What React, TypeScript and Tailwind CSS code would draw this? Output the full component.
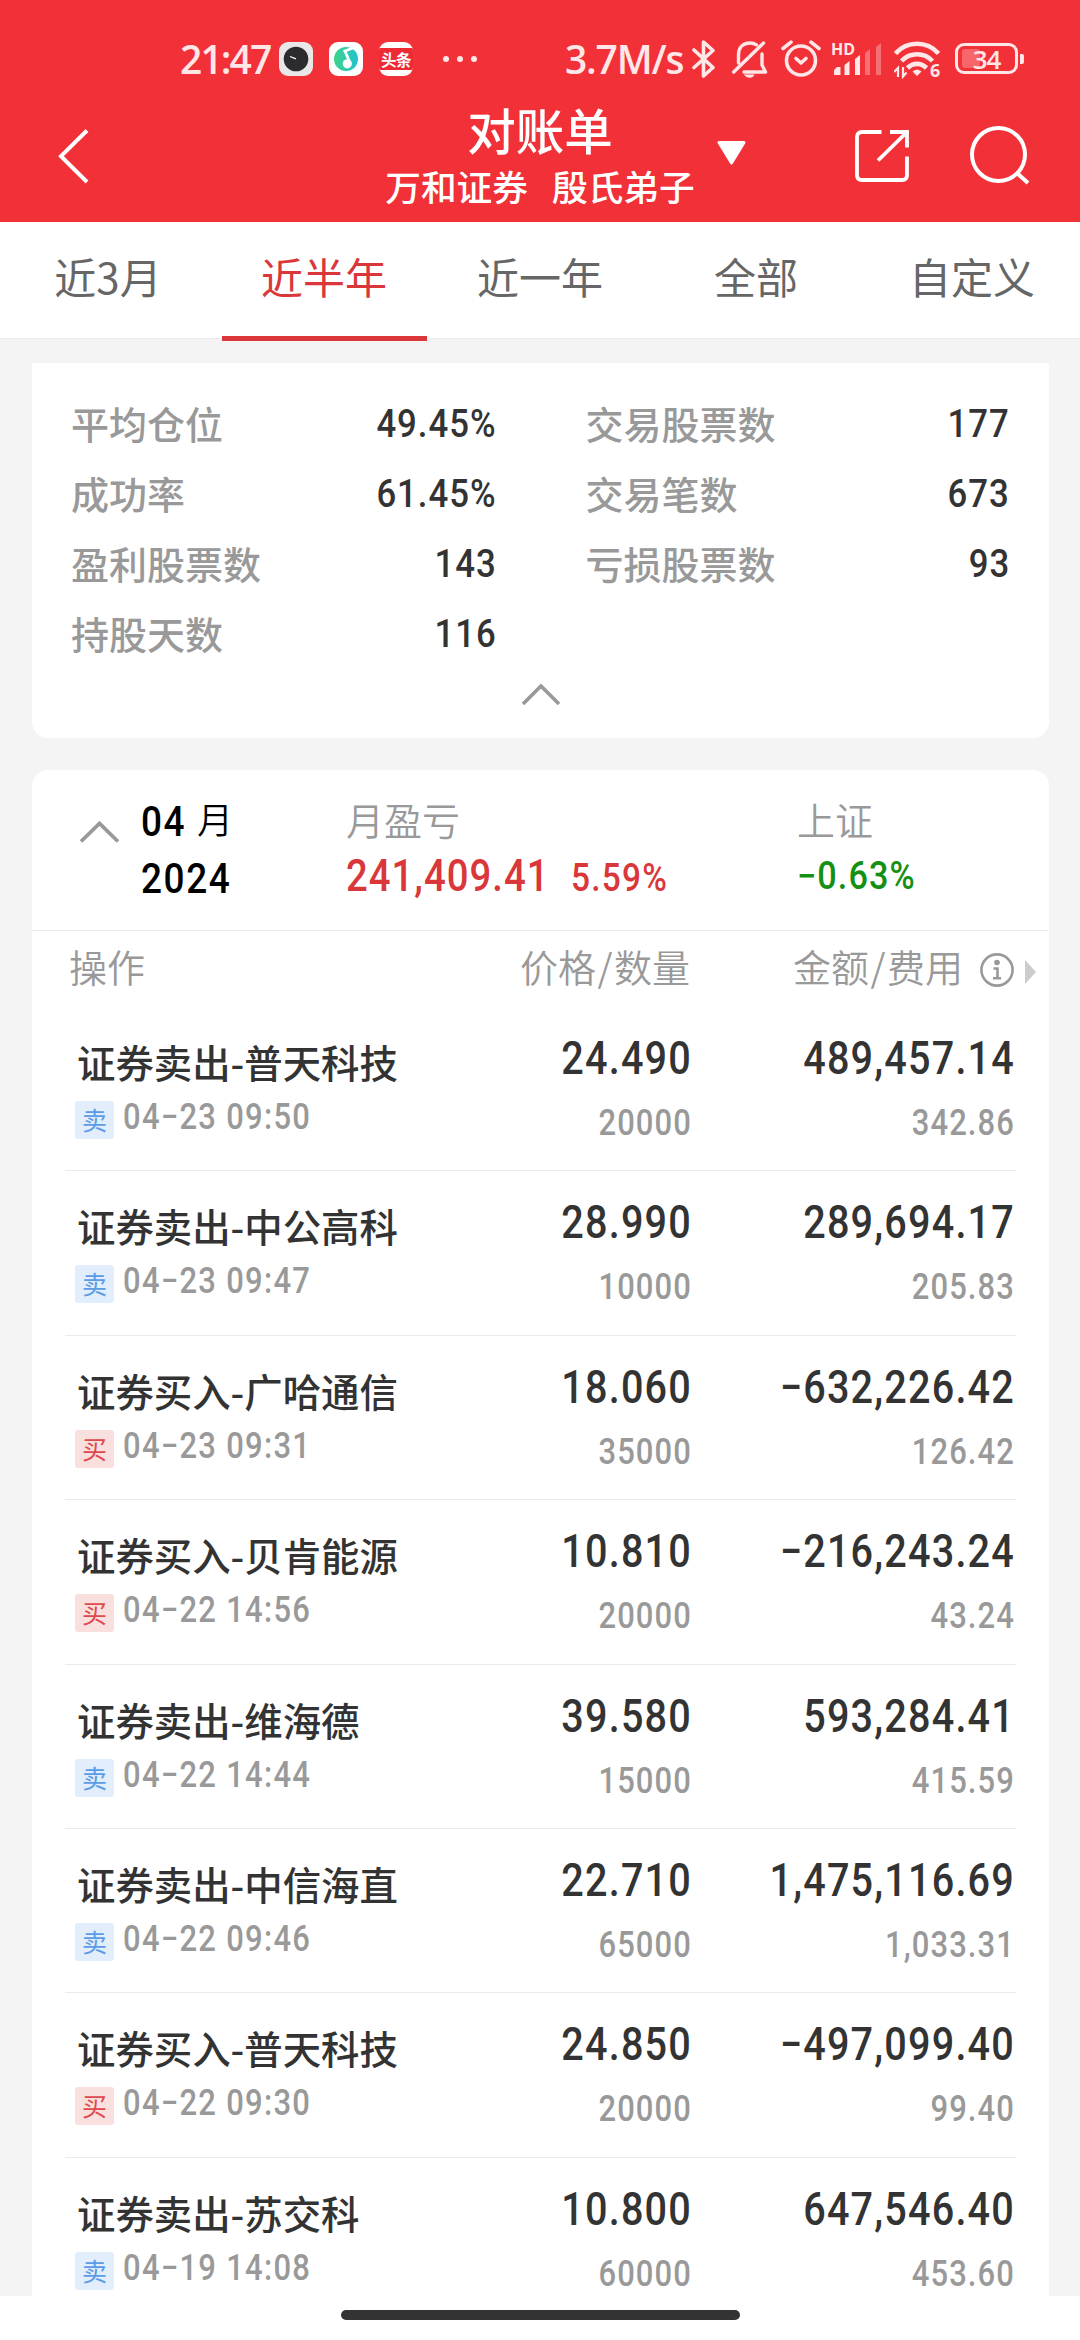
import React from "react";

const CJK = "font-['Noto_Sans_CJK_SC',sans-serif]";
const NUM = "font-[Roboto,'Noto_Sans_CJK_SC',sans-serif]";

type Trade = {
  side: "sell" | "buy";
  name: string;
  time: string;
  price: string;
  qty: string;
  amount: string;
  fee: string;
};

const trades: Trade[] = [
  { side: "sell", name: "普天科技", time: "04−23 09:50", price: "24.490", qty: "20000", amount: "489,457.14", fee: "342.86" },
  { side: "sell", name: "中公高科", time: "04−23 09:47", price: "28.990", qty: "10000", amount: "289,694.17", fee: "205.83" },
  { side: "buy", name: "广哈通信", time: "04−23 09:31", price: "18.060", qty: "35000", amount: "−632,226.42", fee: "126.42" },
  { side: "buy", name: "贝肯能源", time: "04−22 14:56", price: "10.810", qty: "20000", amount: "−216,243.24", fee: "43.24" },
  { side: "sell", name: "维海德", time: "04−22 14:44", price: "39.580", qty: "15000", amount: "593,284.41", fee: "415.59" },
  { side: "sell", name: "中信海直", time: "04−22 09:46", price: "22.710", qty: "65000", amount: "1,475,116.69", fee: "1,033.31" },
  { side: "buy", name: "普天科技", time: "04−22 09:30", price: "24.850", qty: "20000", amount: "−497,099.40", fee: "99.40" },
  { side: "sell", name: "苏交科", time: "04−19 14:08", price: "10.800", qty: "60000", amount: "647,546.40", fee: "453.60" },
];

function StatusBar() {
  return (
    <div className="flex h-[90px] items-start pl-[180px] pt-[35px] text-[#ffe6e7]">
      <div className="w-[99px] whitespace-nowrap font-['Open_Sans',sans-serif] text-[39px] font-semibold leading-[48px] tracking-[-1.900px]">21:47</div>
      <div className="mt-[7px] flex gap-4">
        <svg width="34" height="34" viewBox="0 0 34 34">
          <rect width="34" height="34" rx="9" fill="#e9e7e7" />
          <circle cx="17" cy="17" r="12.3" fill="#2c2c2e" />
          <path d="M11 14.5l6 2.4" stroke="#fff" strokeWidth="1.3" />
        </svg>
        <svg width="34" height="34" viewBox="0 0 34 34">
          <defs>
            <linearGradient id="disc" x1="0" x2="1">
              <stop offset="0" stopColor="#3ed28a" />
              <stop offset="1" stopColor="#1fc3cf" />
            </linearGradient>
          </defs>
          <rect width="34" height="34" rx="9" fill="#fbfffe" />
          <circle cx="17" cy="17" r="12" fill="url(#disc)" />
          <path d="M14.500 9.500L24 6M16 9l5 12" stroke="#fff" strokeWidth="2.8" fill="none" />
          <circle cx="18.300" cy="21.800" r="4.600" fill="#fff" />
        </svg>
        <div className="flex h-[34px] w-[34px] flex-col justify-center overflow-hidden rounded-[9px] bg-white">
          <div className={CJK + " flex h-[22px] w-[34px] items-center justify-center bg-[#ee2a35] text-[15.500px] font-bold leading-[22px] tracking-[-0.500px] text-white"}>头条</div>
        </div>
      </div>
      <svg className="ml-[30px] mt-[21px]" width="34" height="6" viewBox="0 0 34 6" fill="currentColor">
        <circle cx="3" cy="3" r="3" />
        <circle cx="17" cy="3" r="3" />
        <circle cx="31" cy="3" r="3" />
      </svg>
      <div className="ml-[88px] w-[127px] whitespace-nowrap font-['Open_Sans',sans-serif] text-[39px] font-semibold leading-[48px] tracking-[-1.200px]">3.7M/s</div>
      <svg className="mt-[4px]" width="24" height="40" viewBox="0 0 24 40" fill="none" stroke="currentColor" strokeWidth="3.6" strokeLinejoin="round" strokeLinecap="round">
        <path d="M2 11l19 17.500l-9.500 8.500V3L21 11.500L2 28.500" />
      </svg>
      <svg className="ml-4 mt-[5px]" width="36" height="40" viewBox="0 0 36 40" fill="none" stroke="currentColor" strokeWidth="3.4" strokeLinejoin="round" strokeLinecap="round">
        <path d="M6.500 23V15C6.500 7 11.500 3 18 3c2.500 0 4.700.6 6.500 1.800" />
        <path d="M30 14v11l3.500 7H12" />
        <path d="M31.500 3L1.700 32" />
        <path d="M13 35h9c-1 3-8 3-9 0z" fill="currentColor" strokeWidth="1" />
      </svg>
      <svg className="ml-[13px] mt-[5px]" width="40" height="38" viewBox="0 0 40 38" fill="none" stroke="currentColor" strokeWidth="3.6" strokeLinecap="round">
        <circle cx="20" cy="20.500" r="14.500" />
        <path d="M2 8.500l8-6.300M38 8.500l-8-6.300" />
        <path d="M15 18.500l5 4.500l5-4.500" strokeLinejoin="round" />
      </svg>
      <div className="relative ml-[10px] h-[40px] w-[52px]">
        <svg className="absolute left-[3px] top-[8px]" width="48" height="32" viewBox="0 0 48 32" fill="currentColor">
          <path d="M0 27l3-3h3.500v8H0zM10.500 22l5-4v14h-5zM21 16l5-4v20h-5z" />
          <path d="M31 10l5-4v26h-5zM42 4l5-4v32h-5z" opacity=".35" />
        </svg>
        <span className="absolute left-0 top-[6px] font-['Open_Sans',sans-serif] text-[16px] font-bold leading-[16px]">HD</span>
      </div>
      <div className="relative ml-[11px] h-[44px] w-[47px]">
        <svg className="absolute left-0 top-[6px]" width="46" height="38" viewBox="0 0 46 38" fill="none" stroke="currentColor" strokeWidth="4.600" strokeLinecap="butt">
          <path d="M1.500 12.500C13-.5 33-.5 44.500 12.500" />
          <path d="M7.500 20c8.500-9 22.500-9 31 0" />
          <path d="M13.500 27c5.500-5.500 13.500-5.500 19 0" />
          <path d="M23 35l-4.500-4.500c3-2.500 6-2.500 9 0z" fill="currentColor" stroke="none" />
          <path d="M4 36V27L0 31M9 26v9.500l3.500-4" strokeWidth="2.200" />
        </svg>
        <span className="absolute left-[36px] top-[26px] font-['Open_Sans',sans-serif] text-[18px] font-bold leading-[18px]">6</span>
      </div>
      <div className="ml-[14px] mt-[8px] flex items-center">
        <div className="relative flex h-[31px] w-[63px] items-center justify-center rounded-[9px] border-[3px] border-current">
          <div className="absolute left-[4px] top-[3px] h-[19px] w-[18px] rounded-[3px] bg-[#f8656b]" />
          <span className="relative font-['Open_Sans',sans-serif] text-[26px] font-semibold leading-[24px] tracking-[-1px]">34</span>
        </div>
        <div className="ml-[2px] h-[10px] w-[4px] rounded-r-[2px] bg-current" />
      </div>
    </div>
  );
}

function TitleBar() {
  return (
    <div className="flex h-[132px] items-start text-white">
      <svg className="ml-[56px] mt-[38px]" width="34" height="56" viewBox="0 0 34 56" fill="none" stroke="currentColor" strokeWidth="4">
        <path d="M31 2.500L5 28.200L31 54" />
      </svg>
      <div className={CJK + " ml-[294px] w-[312px] whitespace-nowrap text-center font-medium"}>
        <div className="mt-[9px] text-[48.500px] leading-[60px]">对账单</div>
        <div className="mt-[5px] text-[35.700px] leading-[44px]">
          万和证券<span className="inline-block w-[24px]"> </span>殷氏弟子
        </div>
      </div>
      <svg className="ml-[21px] mt-[50px]" width="29" height="26" viewBox="0 0 29 26" fill="currentColor" stroke="currentColor" strokeWidth="3" strokeLinejoin="round">
        <path d="M2 2.500h25L14.500 23z" />
      </svg>
      <svg className="ml-[108px] mt-[39px]" width="56" height="56" viewBox="0 0 56 56" fill="none" stroke="currentColor" strokeWidth="3.800">
        <path d="M27.500 3H8Q3 3 3 8V46Q3 51 8 51H48Q53 51 53 46V27.500" />
        <path d="M36 3H53V18.500M52 4L24 31.500" />
      </svg>
      <svg className="ml-[59px] mt-[34px]" width="62" height="62" viewBox="0 0 62 62" fill="none" stroke="currentColor" strokeWidth="4">
        <circle cx="29.500" cy="30.500" r="26.500" />
        <path d="M48.500 49.500L59 59" />
      </svg>
    </div>
  );
}

const tabs = ["近3月", "近半年", "近一年", "全部", "自定义"];

function Tabs() {
  return (
    <div className={CJK + " flex h-[117px] border-b border-[#ebebeb] bg-white text-[42px] leading-[60px]"}>
      {tabs.map((t, i) => (
        <div key={t} className={i === 1 ? "relative w-[216px] pt-[24px] text-center text-[#d9373a]" : "w-[216px] pt-[24px] text-center text-[#666]"}>
          {t}
          {i === 1 && <div className="absolute -bottom-[3px] left-[6px] h-[5px] w-[205px] bg-[#d9373a]" />}
        </div>
      ))}
    </div>
  );
}

function Stat({ label, value, right }: { label: string; value: string; right?: boolean }) {
  return (
    <div className={right ? "flex h-[70px] justify-between pl-[45px] pr-[39px]" : "flex h-[70px] justify-between pl-[39px] pr-[44px]"}>
      <span className={CJK + " text-[38px] font-[450] leading-[58px] text-[#999]"}>{label}</span>
      <span className={NUM + " origin-right scale-x-[.88] text-[39.500px] font-[550] leading-[60px] tracking-[1.100px] text-[#333]"}>{value}</span>
    </div>
  );
}

function Summary() {
  return (
    <div className="ml-[32px] mt-[24px] h-[375px] w-[1017px] rounded-b-[16px] bg-white pt-[31px]">
      <div className="grid grid-cols-2">
        <Stat label="平均仓位" value="49.45%" />
        <Stat right label="交易股票数" value="177" />
        <Stat label="成功率" value="61.45%" />
        <Stat right label="交易笔数" value="673" />
        <Stat label="盈利股票数" value="143" />
        <Stat right label="亏损股票数" value="93" />
        <Stat label="持股天数" value="116" />
      </div>
      <svg className="mx-auto mt-[7px]" width="40" height="26" viewBox="0 0 40 26" fill="none" stroke="#999" strokeWidth="3.600">
        <path d="M2 23L20 5L38 23" />
      </svg>
    </div>
  );
}

function MonthHeader() {
  return (
    <div className="flex h-[161px] border-b border-[#ebebeb]">
      <svg className="ml-[47px] mt-[49px]" width="42" height="26" viewBox="0 0 42 26" fill="none" stroke="#999" strokeWidth="3.800">
        <path d="M2 22.500L20.500 4.500L39 22.500" />
      </svg>
      <div className={NUM + " ml-[20px] w-[205px] pt-[23px] text-[42px] font-[550] leading-[57px] text-black"}>
        <div className="flex">
          <span className="w-[56px] origin-left scale-x-[.88] tracking-[1.800px]">04</span>
          <span className="pt-[2px] text-[36px] font-[350] leading-[55px]">月</span>
        </div>
        <div className="origin-left scale-x-[.88] tracking-[1.800px]">2024</div>
      </div>
      <div className="w-[451px]">
        <div className={CJK + " mt-[19px] text-[38px] font-[350] leading-[60px] text-[#999]"}>月盈亏</div>
        <div className={NUM + " mt-[2px] flex items-baseline whitespace-nowrap font-[550] leading-[50px] text-[#d9373a]"}>
          <span className="w-[225px] origin-left scale-x-[.86] text-[44.500px] tracking-[1.200px]">241,409.41</span>
          <span className="origin-left scale-x-[.88] text-[38px] tracking-[1.400px]">5.59%</span>
        </div>
      </div>
      <div>
        <div className={CJK + " mt-[19px] text-[38px] font-[350] leading-[60px] text-[#999]"}>上证</div>
        <div className={NUM + " mt-[2px] origin-left scale-x-[.9] text-[38px] font-[550] leading-[50px] tracking-[1.200px] text-[#149012]"}>−0.63%</div>
      </div>
    </div>
  );
}

function ColumnHeader() {
  return (
    <div className={CJK + " flex h-[76px] pt-[5px] text-[38px] font-[350] leading-[60px] text-[#999]"}>
      <div className="w-[250px] pl-[37px]">操作</div>
      <div className="w-[408px] text-right">价格<span className="px-[1.500px]">/</span>数量</div>
      <div className="w-[273px] text-right">金额<span className="px-[1.500px]">/</span>费用</div>
      <svg className="ml-[16px] mt-[16px]" width="36" height="36" viewBox="0 0 36 36" fill="none" stroke="#999" strokeWidth="2.600">
        <circle cx="18" cy="18" r="15.600" />
        <circle cx="18" cy="10.500" r="2.800" fill="#999" stroke="none" />
        <path d="M14.500 16.500H18.500V26M14 26.300H22" />
      </svg>
      <svg className="ml-[10px] mt-[24px]" width="11" height="24" viewBox="0 0 11 24" fill="#ccc">
        <path d="M0 0L11 12L0 24z" />
      </svg>
    </div>
  );
}

const BIG = "origin-right scale-x-[.86] text-[46px] font-[550] leading-[46px] tracking-[1.400px] text-[#333]";
const SMALL = "mt-[24px] origin-right scale-x-[.86] text-[36px] font-medium leading-[36px] tracking-[1.300px] text-[#999]";

function TradeRow({ t }: { t: Trade }) {
  const sell = t.side === "sell";
  return (
    <div className="mx-[33px] flex h-[164.400px] shrink-0 border-b border-[#ebebeb]">
      <div className="w-[360px] pl-[10px] pt-[32px]">
        <div className={CJK + " whitespace-nowrap pl-[2px] text-[38.400px] font-medium leading-[44px] text-[#333]"}>
          {sell ? "证券卖出-" : "证券买入-"}
          {t.name}
        </div>
        <div className="mt-[15px] flex">
          <span
            className={
              sell
                ? CJK + " mt-[3px] h-[38px] w-[39px] rounded-[3px] bg-[#e2eefb] text-center text-[25px] leading-[36px] text-[#5c9ce6]"
                : CJK + " mt-[3px] h-[38px] w-[39px] rounded-[3px] bg-[#fadfdf] text-center text-[25px] leading-[36px] text-[#dc4a4c]"
            }
          >
            {sell ? "卖" : "买"}
          </span>
          <span className={NUM + " ml-[9px] origin-left scale-x-[.86] whitespace-nowrap text-[36px] font-medium leading-[38px] tracking-[1.500px] text-[#999]"}>{t.time}</span>
        </div>
      </div>
      <div className={NUM + " w-[267px] pt-[28px] text-right"}>
        <div className={BIG}>{t.price}</div>
        <div className={SMALL}>{t.qty}</div>
      </div>
      <div className={NUM + " w-[323px] pt-[28px] text-right"}>
        <div className={BIG}>{t.amount}</div>
        <div className={SMALL}>{t.fee}</div>
      </div>
    </div>
  );
}

export default function App() {
  return (
    <div className="flex h-[2340px] w-[1080px] flex-col overflow-hidden bg-white">
      <div className="h-[222px] shrink-0 bg-[#f23038]">
        <StatusBar />
        <TitleBar />
      </div>
      <div className="h-[2074px] shrink-0 overflow-hidden bg-[#f4f4f4]">
        <Tabs />
        <Summary />
        <div className="ml-[32px] mt-[32px] h-[1526px] w-[1017px] overflow-hidden rounded-t-[16px] bg-white">
          <MonthHeader />
          <ColumnHeader />
          {trades.map((t, i) => (
            <TradeRow key={i} t={t} />
          ))}
        </div>
      </div>
      <div className="mx-auto mt-[14px] h-[10px] w-[399px] rounded-full bg-[#333]" />
    </div>
  );
}
